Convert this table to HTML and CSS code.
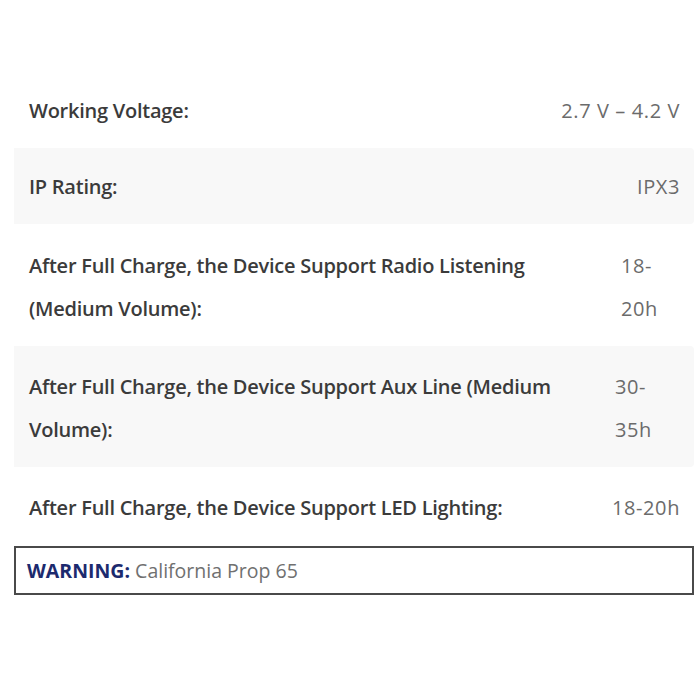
FILE: index.html
```html
<!DOCTYPE html>
<html>
<head>
<meta charset="utf-8">
<link rel="stylesheet" href="styles.css">
</head>
<body>
<div class="specs">
  <div class="row">
    <div class="label">Working Voltage:</div>
    <div class="value">2.7 V – 4.2 V</div>
  </div>
  <div class="row alt">
    <div class="label">IP Rating:</div>
    <div class="value">IPX3</div>
  </div>
  <div class="row double">
    <div class="label">After Full Charge, the Device Support Radio Listening (Medium Volume):</div>
    <div class="value narrow-a">18-20h</div>
  </div>
  <div class="row alt double tight">
    <div class="label">After Full Charge, the Device Support Aux Line (Medium Volume):</div>
    <div class="value narrow-b">30-35h</div>
  </div>
  <div class="row last">
    <div class="label">After Full Charge, the Device Support LED Lighting:</div>
    <div class="value">18-20h</div>
  </div>
  <div class="warning"><span class="warn-title">WARNING:</span> California Prop 65</div>
</div>
</body>
</html>
```
FILE: styles.css
```css
html, body {
  margin: 0;
  padding: 0;
  background: #ffffff;
}
body {
  font-family: "Open Sans", "Liberation Sans", sans-serif;
}
.specs {
  margin: 72px 6px 0 14px;
  display: flex;
  flex-direction: column;
}
.row {
  display: flex;
  align-items: flex-start;
  padding: 17px 14px 16px 15px;
  line-height: 43px;
  font-size: 20px;
}
.row.double {
  padding-top: 20px;
  padding-bottom: 16px;
}
.row.double.tight {
  padding-top: 19px;
}
.row.last {
  padding-top: 19px;
}
.row.alt {
  background: #f8f8f8;
  border-radius: 0 4px 4px 0;
}
.label {
  flex: 1;
  font-weight: 600;
  color: #3b3b3b;
  padding-right: 26px;
  letter-spacing: -0.25px;
}
.value {
  flex: none;
  color: #6b6b6b;
  font-weight: 400;
  font-size: 20px;
  letter-spacing: 0.6px;
  text-align: right;
}
.value.narrow-a {
  width: 59px;
  text-align: left;
}
.value.narrow-b {
  width: 65px;
  text-align: left;
}
.warning {
  margin-top: 1px;
  border: 2px solid #4a4a4a;
  padding: 0 11px;
  height: 45px;
  line-height: 46px;
  font-size: 19.5px;
  color: #707070;
}
.warn-title {
  font-weight: 700;
  color: #1c2a6e;
}
```
